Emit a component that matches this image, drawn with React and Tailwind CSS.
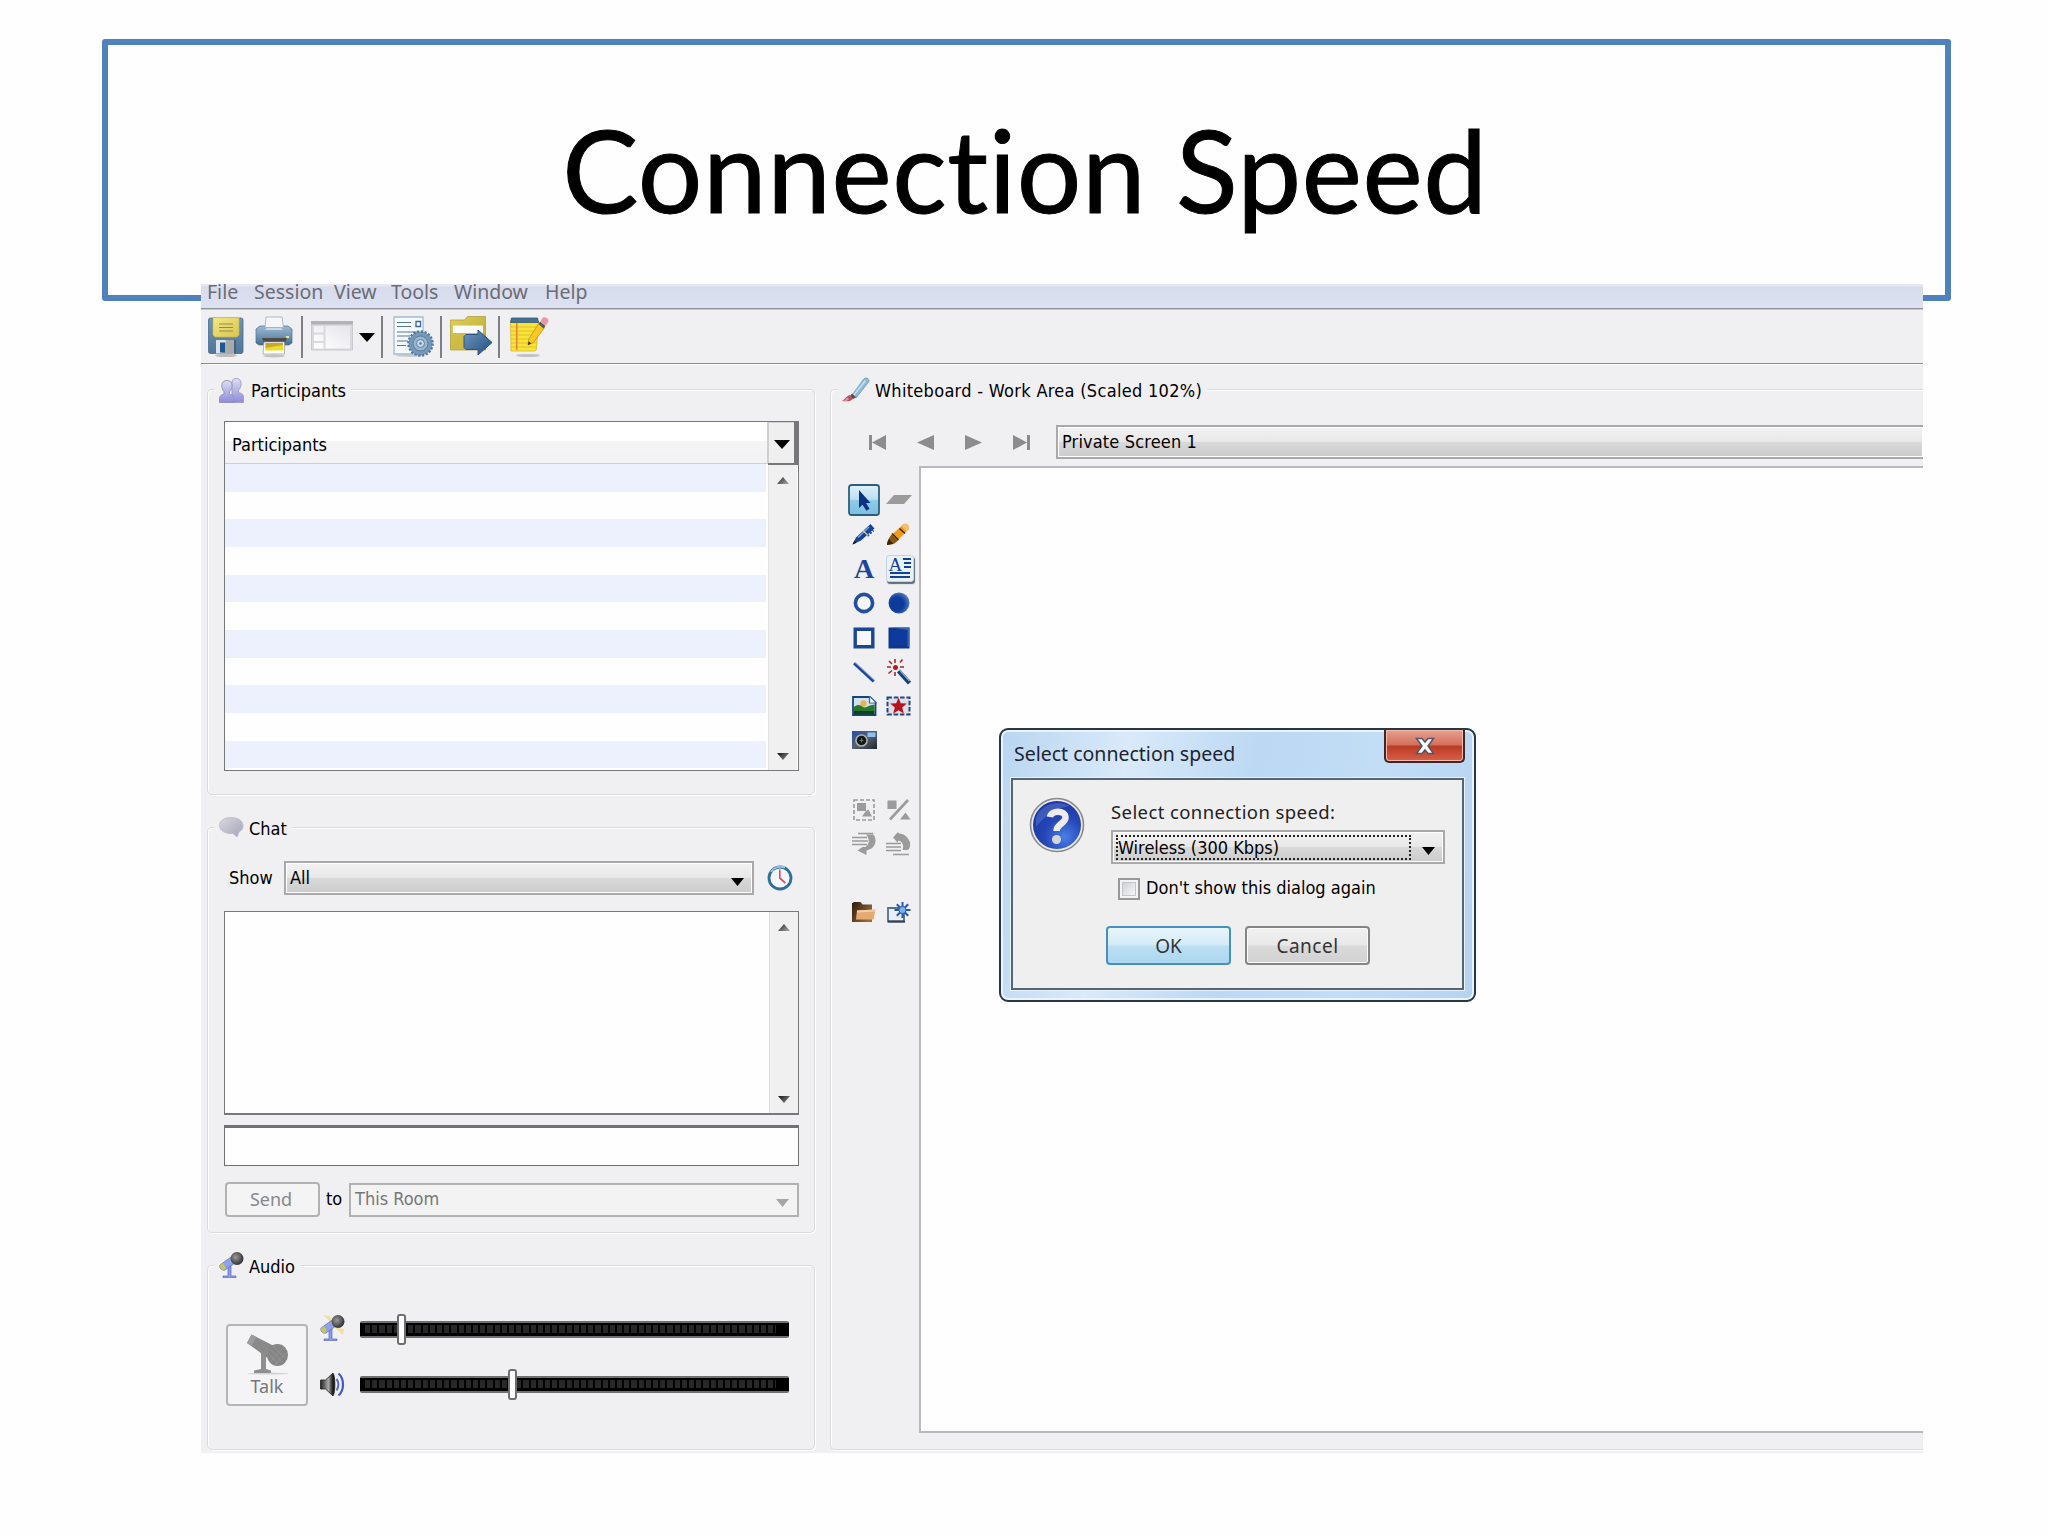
import React from "react";

const MENU_ITEMS = [
  { label: "File", width: "w-[47px]" },
  { label: "Session", width: "w-[80px]" },
  { label: "View", width: "w-[57px]" },
  { label: "Tools", width: "w-[63px]" },
  { label: "Window", width: "w-[91px]" },
  { label: "Help", width: "w-[60px]" },
];

const TAHOMA = "font-['DejaVu_Sans_Condensed','DejaVu_Sans',sans-serif] [font-stretch:condensed]";
const SEGOE = "font-['Noto_Sans','Open_Sans',sans-serif]";

/* ---------- small glyphs ---------- */

function Down({ className = "w-[14px] h-[8px] text-black" }) {
  return (
    <svg viewBox="0 0 14 8" preserveAspectRatio="none" className={className}>
      <path d="M0 0h14L7 8z" fill="currentColor" />
    </svg>
  );
}

function ScrollArrow({ up }) {
  return (
    <svg viewBox="0 0 13 8" preserveAspectRatio="none" className={`w-[12px] h-[7px] ${up ? "" : "rotate-180"}`}>
      <defs>
        <linearGradient id={up ? "sau" : "sad"} x1="0" x2="1" y1="0" y2="0.6">
          <stop offset="0" stopColor={up ? "#222" : "#999"} />
          <stop offset="1" stopColor={up ? "#999" : "#222"} />
        </linearGradient>
      </defs>
      <path d="M0 8h13L6.5 0z" fill={up ? "url(#sau)" : "url(#sad)"} />
    </svg>
  );
}

/* ---------- toolbar icons ---------- */

function SaveIcon() {
  return (
    <svg viewBox="0 0 36 42" className="w-[36px] h-[42px]">
      <defs>
        <linearGradient id="sv" x1="0" x2="0" y1="0" y2="1">
          <stop offset="0" stopColor="#6f93b3" />
          <stop offset="1" stopColor="#4f7699" />
        </linearGradient>
        <linearGradient id="svy" x1="0" x2="1" y1="0" y2="1">
          <stop offset="0" stopColor="#f3e884" />
          <stop offset="1" stopColor="#d9c54e" />
        </linearGradient>
      </defs>
      <ellipse cx="18" cy="39.5" rx="11" ry="1.6" fill="#bbb" />
      <rect x="0.5" y="2" width="34.5" height="35.5" rx="2" fill="url(#sv)" stroke="#476b8b" strokeWidth="0.8" />
      <path d="M5 1.5h26V19l-2 2H7l-2-2z" fill="url(#svy)" stroke="#c9b750" strokeWidth="0.7" />
      <path d="M11 8h14M11 11.5h14M11 15h14" stroke="#8c8a5c" strokeWidth="1" />
      <path d="M8 24h18v13.5H8z" fill="#dfe3e7" />
      <path d="M18 24h8v13.5H14z" fill="#a9aaac" />
      <path d="M12 26.5h5v10h-5z" fill="#1f5791" />
      <path d="M26 24h2v13.5h-2z" fill="#42627f" />
    </svg>
  );
}

function PrintIcon() {
  return (
    <svg viewBox="0 0 38 42" className="w-[38px] h-[42px]">
      <defs>
        <linearGradient id="pr" x1="0" x2="0" y1="0" y2="1">
          <stop offset="0" stopColor="#9db8d0" />
          <stop offset="0.5" stopColor="#7397b8" />
          <stop offset="1" stopColor="#436b90" />
        </linearGradient>
      </defs>
      <ellipse cx="19" cy="40" rx="11" ry="1.5" fill="#c4c4c4" />
      <path d="M1 13l4-3h28l4 3v14l-3 2H4l-3-2z" fill="url(#pr)" stroke="#4c7090" strokeWidth="0.7" />
      <path d="M11 1h16l1.5 10.5H10z" fill="#f4f6f8" stroke="#a5a9ad" strokeWidth="0.8" />
      <path d="M12 12h14l2 2H10z" fill="#cddae6" />
      <path d="M7 22h25l-2 5H9z" fill="#4c4c42" />
      <path d="M9 26h20.5v12H8z" fill="#fff" stroke="#9a9a9a" strokeWidth="0.7" />
      <path d="M10.5 27h17.5v7.5H10.5z" fill="#f1da2c" />
      <path d="M10.5 27h17.5v2l-17.5 3z" fill="#c3aa2c" />
      <path d="M31 20h3v2h-3z" fill="#e8e48a" />
    </svg>
  );
}

function LayoutIcon() {
  return (
    <svg viewBox="0 0 42 30" className="w-[42px] h-[30px]">
      <defs>
        <linearGradient id="ly" x1="0" x2="1" y1="1" y2="0">
          <stop offset="0" stopColor="#ffffff" />
          <stop offset="1" stopColor="#e6e6ea" />
        </linearGradient>
      </defs>
      <path d="M0.5 1h41v28h-41z" fill="#d9dade" stroke="#c9cacf" strokeWidth="1" />
      <path d="M0 0h42v3.5H0z" fill="#b3b3b5" />
      <path d="M3 5h9.5v6.5H3zM3 13.5h9.5v6.5H3zM3 22h9.5v5.5H3zM14.5 5H39v22.5H14.5z" fill="url(#ly)" />
    </svg>
  );
}

function GearDocIcon() {
  return (
    <svg viewBox="0 0 42 42" className="w-[42px] h-[42px]">
      <ellipse cx="16" cy="39.5" rx="13" ry="1.5" fill="#ccc" />
      <path d="M1 1h29v37H1z" fill="#f7fafc" stroke="#9fbcd6" strokeWidth="1.3" />
      <path d="M4 6.5h14M4 10.5h14M4 16h22M4 20h13M4 25h11M4 29.5h9" stroke="#55779b" strokeWidth="1.2" />
      <path d="M23 5.5h4.5v5H23z" fill="#fff" stroke="#3a669a" strokeWidth="1.3" />
      <circle cx="27.5" cy="27.5" r="11.8" fill="#6d92b4" stroke="#527a9f" strokeWidth="3" strokeDasharray="2.2 1.5" />
      <circle cx="27.5" cy="27.5" r="11" fill="#7699ba" />
      <circle cx="27.5" cy="27.5" r="7.5" fill="#9bb5cd" stroke="#557c9f" strokeWidth="1" />
      <circle cx="27.5" cy="27.5" r="4" fill="#c9d7e4" stroke="#5a81a5" strokeWidth="1" />
      <circle cx="27.5" cy="27.5" r="1.2" fill="#55789b" />
    </svg>
  );
}

function FolderArrowIcon() {
  return (
    <svg viewBox="0 0 43 42" className="w-[43px] h-[42px]">
      <defs>
        <linearGradient id="fa" x1="0" x2="1" y1="0" y2="1">
          <stop offset="0" stopColor="#e0d05a" />
          <stop offset="1" stopColor="#b8a62c" />
        </linearGradient>
        <linearGradient id="fb" x1="0" x2="1" y1="0" y2="1">
          <stop offset="0" stopColor="#7196ba" />
          <stop offset="1" stopColor="#1f4f82" />
        </linearGradient>
      </defs>
      <path d="M0.5 4h14l3-3.5h18V34h-35z" fill="url(#fa)" stroke="#a99a35" strokeWidth="0.7" />
      <path d="M3 9.5h30v7.5H3z" fill="#fbfbf7" />
      <path d="M1 17.5h34V33.5H1z" fill="#cfbd44" opacity="0.7" />
      <path d="M16 18.5h12V14l14 12.500-14 12.500v-5.500H16l-2-2v-11z" fill="url(#fb)" stroke="#2c5580" strokeWidth="1" />
    </svg>
  );
}

function NotepadIcon() {
  return (
    <svg viewBox="0 0 40 42" className="w-[40px] h-[42px]">
      <ellipse cx="18" cy="39.5" rx="12" ry="1.6" fill="#c2c2c2" />
      <path d="M0.5 5h28l-2 28-1.5 2H1z" fill="#fbe534" stroke="#cdb11f" strokeWidth="0.7" />
      <path d="M1.5 2h26l1 4.500H0.5z" fill="#46708f" stroke="#2f5878" strokeWidth="0.8" />
      <path d="M1 11h26M1 15h26M1 19h26M1 23h26M1 27h26M1 31h25" stroke="#d9bd3a" strokeWidth="1" />
      <path d="M6.8 7v27" stroke="#e06a3a" strokeWidth="1.2" />
      <path d="M29 7l5.5 4.5-11 15-5.5 2.5.8-6z" fill="#f7cb23" stroke="#c8921f" strokeWidth="0.9" />
      <path d="M18 29l.6-3.8 2.7 2.2z" fill="#2b2b1a" />
      <path d="M30 5.5l5.5 4.5-2 2.5L28.5 8z" fill="#555a60" />
      <path d="M32 2.5c2-3 7-0.5 6.5 3L35.5 10 30.5 5.5z" fill="#eb98a5" />
    </svg>
  );
}

/* ---------- legend icons ---------- */

function PeopleIcon() {
  return (
    <svg viewBox="0 0 25 25" className="w-[25px] h-[25px]">
      <defs>
        <linearGradient id="pp" x1="0" x2="0" y1="0" y2="1">
          <stop offset="0" stopColor="#dedef2" />
          <stop offset="1" stopColor="#8e8bdc" />
        </linearGradient>
      </defs>
      <path d="M13 4c0-2.5 2-3.6 4.5-3.600S22 2 22 5.500s-1.200 5.500-2.500 6.500v2.500c3 .7 5 2 5 4.500v5.500H13z" fill="url(#pp)" stroke="#9c9cc0" strokeWidth="0.9" />
      <path d="M8 2.500c3 0 5 1.700 5 5 0 3-1.200 5-2.500 6.200v2.500c3 .6 4.500 2 4.500 4.300v4H0.500v-4c0-2.500 1.500-3.700 4.500-4.300v-2.500C3.700 12.500 2.800 10.500 2.800 7.500c0-3.300 2.200-5 5.200-5z" fill="url(#pp)" stroke="#8f8fb8" strokeWidth="0.9" />
    </svg>
  );
}

function BubbleIcon() {
  return (
    <svg viewBox="0 0 25 21" className="w-[25px] h-[21px] -mt-[2px]">
      <defs>
        <linearGradient id="bb" x1="0" x2="1" y1="0" y2="1">
          <stop offset="0" stopColor="#d9d9de" />
          <stop offset="1" stopColor="#a3a4b8" />
        </linearGradient>
      </defs>
      <path d="M12 0.500c7 0 12 3.500 12 8 0 3.500-1.500 5-4 6.500l-2 5-4-3.500C6 17 .5 13.500.5 8.500.500 4 5 .5 12 .5z" fill="url(#bb)" stroke="#b9bac6" strokeWidth="0.8" />
    </svg>
  );
}

function BrushIcon() {
  return (
    <svg viewBox="0 0 28 25" className="w-[28px] h-[25px] -mt-[2px]">
      <path d="M10 18L21 3c2-3.500 6.500-2 6 1.500L14 21z" fill="#8db9d4" stroke="#6f9dbb" strokeWidth="0.8" />
      <path d="M12 18L23.5 3.5" stroke="#c7e0ee" strokeWidth="1.6" />
      <path d="M10 16.500l4 4-3 1.500-3-3z" fill="#5c4a56" />
      <path d="M8 18l3 4c-2 2.500-6 2.500-11 2 3-1.500 4-5 8-6z" fill="#b5545f" />
      <path d="M0 24c3-.5 4-2 5-3.500l2 2c-2 1.300-4 1.700-7 1.500z" fill="#dc9aa2" />
    </svg>
  );
}

function MicIcon({ glow }) {
  return (
    <svg viewBox="0 0 25 26" className="w-[25px] h-[26px] -mt-[2px]">
      <defs>
        <radialGradient id="mc" cx="0.4" cy="0.4" r="0.7">
          <stop offset="0" stopColor="#9a9a9a" />
          <stop offset="1" stopColor="#222" />
        </radialGradient>
      </defs>
      {glow && <path d="M3 0l7 1 3 8zM14 12l10 2-1 6z" fill="#eee2a0" />}
      <path d="M9 14h3v10h5v1.600H4V24h5z" fill="#8b9be6" stroke="#5468bb" strokeWidth="0.7" />
      <path d="M1 13L12 5l4 6-10 7c-3 1-6-2-5-5z" fill="#8ea2ea" stroke="#5c70b8" strokeWidth="0.7" />
      <path d="M1 13l3-2 3 5-2 2c-2 .5-4-2-4-5z" fill="#c5c55c" />
      <circle cx="18" cy="6.5" r="6.5" fill="url(#mc)" />
    </svg>
  );
}

function SpeakerIcon() {
  return (
    <svg viewBox="0 0 25 25" className="w-[25px] h-[25px]">
      <defs>
        <linearGradient id="sp" x1="0" x2="1" y1="0" y2="0">
          <stop offset="0" stopColor="#222" />
          <stop offset="0.55" stopColor="#aaa" />
          <stop offset="0.8" stopColor="#333" />
          <stop offset="1" stopColor="#000" />
        </linearGradient>
      </defs>
      <path d="M0.500 8h5l7.500-7c2.500 3 2.500 20 0 23l-7.500-7h-5z" fill="url(#sp)" stroke="#222" strokeWidth="0.8" />
      <path d="M16.500 7c2.500 3 2.500 8 0 11.500" fill="none" stroke="#5c6bd0" strokeWidth="2" />
      <path d="M18.500 1.500c6 5 6 17 0 22" fill="none" stroke="#4558c8" strokeWidth="2.2" />
    </svg>
  );
}

function TalkIcon() {
  return (
    <svg viewBox="0 0 43 41" className="w-[43px] h-[41px] shrink-0">
      <ellipse cx="22" cy="39.6" rx="21" ry="1" fill="#d2d2d2" />
      <path d="M15 18h5v17l5 1.500v2.500H8v-2.500l7-1.500z" fill="#8f8f8f" />
      <path d="M5.500 0.500L28 12c-5 2-7 6-6.500 12L1 9z" fill="#8a8a8a" />
      <path d="M5.500 0.500l5 2.500-5 9L1 9z" fill="#9c9c9c" />
      <ellipse cx="31.5" cy="21" rx="10.5" ry="11" fill="#858585" />
      <path d="M24 15l12 13M27 12l12 12M23 20l9 10M38 13L24 28M41 18L29 31" stroke="#969696" strokeWidth="0.8" />
    </svg>
  );
}

function ClockIcon() {
  return (
    <svg viewBox="0 0 26 26" className="w-[26px] h-[26px]">
      <circle cx="13" cy="13" r="11" fill="#f3f7fb" stroke="#2f6d9b" strokeWidth="2.8" />
      <path d="M4 7C7 2 13 .6 18 2.500" fill="none" stroke="#9dc0da" strokeWidth="2" />
      <path d="M12.800 4.500V13l5.500 5" fill="none" stroke="#d8546a" strokeWidth="1.7" />
    </svg>
  );
}

/* ---------- whiteboard tools ---------- */

const NAVY = "#12409a";
const GREY = "#9b9b9b";

const TOOLS = [
  // pointer
  <svg viewBox="0 0 32 32" className="w-[32px] h-[32px]">
    <defs>
      <linearGradient id="tp" x1="0" x2="0" y1="0" y2="1">
        <stop offset="0" stopColor="#dff1fa" />
        <stop offset="0.48" stopColor="#b9dff1" />
        <stop offset="0.52" stopColor="#8fcae8" />
        <stop offset="1" stopColor="#7dbfe0" />
      </linearGradient>
    </defs>
    <rect x="1" y="1" width="30" height="30" rx="2.5" fill="url(#tp)" stroke="#2c5f7e" strokeWidth="1.8" />
    <path d="M11 6v18l3.500-3.200 4 6 3-2-3.500-5.800h4.500z" fill="#0d3184" />
  </svg>,
  // eraser
  <svg viewBox="0 0 26 24" className="w-[26px] h-[24px]">
    <path d="M8 7h18l-8 9H0z" fill={GREY} />
  </svg>,
  // pen
  <svg viewBox="0 0 24 22" className="w-[24px] h-[22px] -mt-[2px]">
    <path d="M0.500 21.500l3.500-7L18.500 1l4 4.500L9 17.500z" fill="#164392" />
    <path d="M6 14.500L17 4" stroke="#7fa0d8" strokeWidth="1.5" />
    <path d="M15.500 13l6-5.500" stroke={NAVY} strokeWidth="1.8" strokeDasharray="2 1.5" />
    <path d="M11 7.500l5 5" stroke="#d9d27a" strokeWidth="1.3" />
    <path d="M0.500 21.500l2-4 2 2.200z" fill="#111" />
  </svg>,
  // highlighter
  <svg viewBox="0 0 26 22" className="w-[26px] h-[22px] -mt-[2px]">
    <path d="M5 12.500L17 1.500c3-2 7 1.500 5.500 5L11 18z" fill="#f29b18" />
    <path d="M18 .9c3-1.500 6.500 1.500 4.500 5.500l-2 2-5-5.300z" fill="#f8bd66" />
    <path d="M13.500 5.500l5.500 5M6 10.500l6.500 6.500" stroke="#2b2008" strokeWidth="1.3" />
    <path d="M5.500 11.500l6.500 6-3.500 3L1 22c0-4 2-7 4.500-10.500z" fill="#8a5610" />
    <path d="M1 22c0-2.500 1-4.500 2-6l4.500 5z" fill="#3d2606" />
  </svg>,
  // text
  <span className="font-['Liberation_Serif',serif] font-bold text-[28px] leading-[24px] text-[#1b4796]">A</span>,
  // text box
  <span className="w-[28px] h-[27px] flex justify-between items-start rounded-[3px] bg-[#e9f1fa] border border-[#c3d5e4] shadow-[1px_2px_1px_#5b6d77] mr-[-2px] px-[2px] bg-[linear-gradient(#12409a,#12409a),linear-gradient(#12409a,#12409a)] bg-[length:20px_2px,20px_2px] bg-[position:3px_16px,3px_20px] bg-no-repeat">
    <span className="font-['Liberation_Serif',serif] text-[19px] leading-[17px] text-[#12409a]">A</span>
    <svg viewBox="0 0 8 14" className="w-[8px] h-[14px] mt-[1px]">
      <path d="M0 2h8M1 6h7M1 10h7" stroke={NAVY} strokeWidth="2" />
    </svg>
  </span>,
  // circle
  <svg viewBox="0 0 22 22" className="w-[22px] h-[22px]">
    <circle cx="11" cy="11" r="8.6" fill="#f7f8fc" stroke="#234f9f" strokeWidth="3.6" />
  </svg>,
  // filled circle
  <svg viewBox="0 0 22 22" className="w-[22px] h-[22px]">
    <defs>
      <radialGradient id="tc" cx="0.4" cy="0.55" r="0.65">
        <stop offset="0.5" stopColor="#0e3b9b" />
        <stop offset="1" stopColor="#6387c8" />
      </radialGradient>
    </defs>
    <circle cx="11" cy="11" r="10.5" fill="url(#tc)" />
  </svg>,
  // square
  <svg viewBox="0 0 22 22" className="w-[22px] h-[22px]">
    <path d="M2.200 2.200h17.600v17.600H2.200z" fill="#f7f8fc" stroke="#1a4699" strokeWidth="3.4" />
  </svg>,
  // filled square
  <svg viewBox="0 0 22 22" className="w-[22px] h-[22px]">
    <path d="M0.500 0.500h21v21h-21z" fill="#0d3690" />
    <path d="M3 .5h18.500V19l-2 1V3z" fill="#3c64b4" />
    <path d="M3 3h16v15H3z" fill="#0e3b9b" />
  </svg>,
  // line
  <svg viewBox="0 0 22 22" className="w-[22px] h-[22px]">
    <path d="M1 2l20 18.500" stroke="#8fa9cf" strokeWidth="3.6" />
    <path d="M1 2.500l19.500 18" stroke="#1c4691" strokeWidth="2.2" />
  </svg>,
  // wand
  <svg viewBox="0 0 24 26" className="w-[24px] h-[26px]">
    <path d="M11.500 12L22.500 24" stroke="#164079" strokeWidth="4.2" />
    <path d="M12.500 11l10 11" stroke="#8ba9cf" strokeWidth="1.2" />
    <circle cx="8.5" cy="8.5" r="2.5" fill="#b01c24" />
    <path d="M8 0v4M2 2l3 3M0 8h4M1.500 14.500L5 11.500M8 13v4M13 3.500l2.500-3M13 8h4" stroke="#a62a2c" strokeWidth="1.6" />
  </svg>,
  // picture
  <svg viewBox="0 0 25 20" className="w-[25px] h-[20px] -mt-[2px]">
    <path d="M1 1h16.500l6 5.500V19H1z" fill="#cfe2f2" stroke="#174579" strokeWidth="1.8" />
    <circle cx="11.5" cy="7.5" r="3.2" fill="#efb24a" />
    <path d="M2 11c4-3 6-2 9 0s7-3 11.500-2v6H2z" fill="#287a2a" />
    <path d="M2 15h20.500v3.300H2z" fill="#123f1b" />
    <path d="M17.500 0v7h7z" fill="#fff" stroke="#3a659e" strokeWidth="1.2" />
  </svg>,
  // clip art
  <svg viewBox="0 0 25 20" className="w-[25px] h-[20px] -mt-[2px]">
    <path d="M1.500 1.500h22v17h-22z" fill="#dcdfe9" stroke="#27467c" strokeWidth="2" strokeDasharray="4.5 1.8" />
    <path d="M12.500 1.500l2.300 5.700 6 .3-4.600 4 1.600 6-5.300-3.300-5.300 3.300 1.600-6-4.600-4 6-.3z" fill="#b3151f" />
  </svg>,
  // camera
  <svg viewBox="0 0 25 18" className="w-[25px] h-[18px] -mt-[2px]">
    <defs>
      <linearGradient id="cm" x1="0" x2="1" y1="0" y2="1">
        <stop offset="0" stopColor="#254fae" />
        <stop offset="0.5" stopColor="#57626e" />
        <stop offset="1" stopColor="#20262c" />
      </linearGradient>
    </defs>
    <path d="M0 0h25v18H0z" fill="url(#cm)" />
    <path d="M15.500 1.500h8v4.500h-8z" fill="#8fc0f4" />
    <circle cx="9.5" cy="9.5" r="6.3" fill="#aab0ae" />
    <circle cx="9.5" cy="9.5" r="4.7" fill="#151515" />
    <path d="M9.500 7v4.500M7.500 9.500h4" stroke="#5d7a68" strokeWidth="1.2" />
  </svg>,
  null,
  null,
  null,
  // group
  <svg viewBox="0 0 22 22" className="w-[22px] h-[22px]">
    <path d="M1 1h20v20H1z" fill="none" stroke={GREY} strokeWidth="1.6" strokeDasharray="4 2" />
    <path d="M4 4h9v8H4zM9 17.500h10l-3.500-7-3 2z" fill={GREY} />
  </svg>,
  // ungroup
  <svg viewBox="0 0 24 22" className="w-[24px] h-[22px]">
    <path d="M0.500 1.500h9v8.500h-9zM13 20.500h10.500l-5-7z" fill={GREY} />
    <path d="M21 1L3 20.500" stroke={GREY} strokeWidth="2.6" />
  </svg>,
  // send to back
  <svg viewBox="0 0 24 24" className="w-[24px] h-[24px]">
    <path d="M6 1.500h15M0 5.500h15M0 9h16M0 12.500h15" stroke={GREY} strokeWidth="1.6" />
    <path d="M14 2.500h7.500c3 4.500 3 10-2 14l-5 2V23l-9-4.500 5-3.500h3c4-3 4.500-8 .5-12.500z" fill={GREY} />
  </svg>,
  // bring to front
  <svg viewBox="0 0 25 24" className="w-[25px] h-[24px]">
    <path d="M0 11.500h15M0 15h15M0 18.500h15M7 22.500h16" stroke={GREY} strokeWidth="1.6" />
    <path d="M7 5.500L12 0l1 1.500c6 0 9 4.500 11 8.500 .5 4 0 6-2 8h-5.500c1.500-4 .5-7-2.500-9l-2-.3V11z" fill={GREY} />
  </svg>,
  null,
  null,
  // open folder
  <svg viewBox="0 0 24 21" className="w-[24px] h-[21px]">
    <defs>
      <linearGradient id="fo" x1="0" x2="1" y1="0" y2="0.6">
        <stop offset="0" stopColor="#2b1a0d" />
        <stop offset="1" stopColor="#9b6a3c" />
      </linearGradient>
    </defs>
    <path d="M0 1.500L2 0h6.500l2 2.500H20V20H0z" fill="url(#fo)" />
    <path d="M5 8.500l18.500-1-2 10H4z" fill="#e3ab72" />
    <path d="M5 8.500l18.500-1-.4 2L5 10.500z" fill="#f3cfa5" />
  </svg>,
  // new
  <svg viewBox="0 0 24 21" className="w-[24px] h-[21px]">
    <path d="M1 6h16v13.500H1z" fill="#e9eef4" stroke="#54708e" strokeWidth="1.8" />
    <path d="M1 19.500h17" stroke="#34414e" strokeWidth="2" />
    <path d="M15.500 0v16M7.500 8h16M9.800 2.300l11.400 11.400M21.200 2.300L9.800 13.700" stroke="#2258b4" strokeWidth="2" />
    <circle cx="15.5" cy="8" r="3.6" fill="#7fb0ea" stroke="#2258b4" strokeWidth="1" />
  </svg>,
];

const NAV_BUTTONS = [
  "M0 0h3v15H0zM3 7.500L17 0v15z",
  "M0 7.500L17 0v15z",
  "M17 7.500L0 0v15z",
  "M14 0h3v15h-3zM14 7.500L0 0v15z",
];

/* ---------- building blocks ---------- */

function Group({ icon, title, className, legendClass = "", children }) {
  return (
    <section
      className={`border border-[#d9dcdd] rounded-[5px] shadow-[inset_1px_1px_0_#fff,1px_1px_0_#fff] ${className}`}
    >
      <div className={`relative flex items-center h-[26px] -mt-[13px] ml-[6px] w-fit bg-[#f0eff1] pl-[5px] ${legendClass}`}>
        {icon}
        <span className={`${TAHOMA} text-[18px] leading-[26px] whitespace-nowrap mt-[1px]`}>{title}</span>
      </div>
      {children}
    </section>
  );
}

function Combo({ className, children }) {
  return (
    <div
      className={`border-2 border-[#a9a9ab] h-[34px] flex items-center shadow-[inset_0_0_0_1px_#fff] bg-[linear-gradient(#f3f2f3,#e9e8e9_48%,#d9d8d9_52%,#cdcccd)] ${className}`}
    >
      {children}
    </div>
  );
}

function ScrollBar() {
  return (
    <div className="w-[29px] border-l border-[#e2e2e3] bg-[#f0f0f1] flex flex-col items-center justify-between pt-[12px] pb-[10px]">
      <ScrollArrow up />
      <ScrollArrow />
    </div>
  );
}

function Slider({ icon, value, className = "" }) {
  return (
    <div className={`flex items-center h-[32px] ${className}`}>
      {icon}
      <div className="relative ml-[15px] w-[429px] h-[17px] rounded-[2px] bg-black border-y-2 border-[#6f6f6f] flex items-center pl-[5px]">
        <div className="w-[411px] h-[8px] bg-[repeating-linear-gradient(90deg,#272727_0,#272727_5.200px,#000_5.200px,#000_7.200px)]" />
        <div
          className="absolute -top-[9px] w-[9px] h-[31px] rounded-[3px] border-2 border-[#6e6e6e] bg-white"
          style={{ left: value }}
        />
      </div>
    </div>
  );
}

function ParticipantsPanel() {
  return (
    <Group icon={<PeopleIcon />} title="Participants" className="h-[406px]" legendClass="pr-[5px] gap-[7px]">
      <div className="mt-[18px] ml-[16px] w-[575px] h-[350px] border border-[#77787c] bg-white flex">
        <div className="flex-1 flex flex-col">
          <div className={`${TAHOMA} h-[42px] shrink-0 text-[18px] leading-[46px] pl-[7px] border-b border-r border-[#cfcfd1] bg-[linear-gradient(#fff_45%,#f5f5f6_46%,#f2f2f4)]`}>
            Participants
          </div>
          <div className="flex-1 mr-[2px] bg-[repeating-linear-gradient(#edf1fd_0,#edf1fd_27.650px,#fefefe_27.650px,#fefefe_55.300px)]" />
        </div>
        <div className="flex flex-col w-[30px]">
          <div className="h-[43px] border-b-2 border-r-4 border-[#77777b] bg-[#efeff0] shadow-[inset_1px_1px_0_#d0d0d2] flex items-center justify-center pt-[4px] pl-[2px]">
            <Down className="w-[16px] h-[9px] text-black" />
          </div>
          <div className="flex-1 flex">
            <ScrollBar />
          </div>
        </div>
      </div>
    </Group>
  );
}

function ChatPanel() {
  return (
    <Group icon={<BubbleIcon />} title="Chat" className="h-[406px] mt-[32px]" legendClass="pr-[5px] gap-[5px]">
      <div className="pl-[16px] pr-[15px]">
        <div className="flex items-center mt-[20px] h-[34px]">
          <span className={`${TAHOMA} text-[18px] leading-[26px] w-[60px] pl-[5px] -mt-[1px]`}>Show</span>
          <Combo className="w-[470px] pl-[4px] pr-[8px] justify-between">
            <span className={`${TAHOMA} text-[18px] leading-[26px] -mt-[1px]`}>All</span>
            <Down className="w-[13px] h-[8px] mt-[7px] text-black" />
          </Combo>
          <span className="ml-[13px]"><ClockIcon /></span>
        </div>
        <div className="mt-[16px] h-[204px] w-[575px] border border-b-2 border-[#77787c] bg-[#fefefe] flex justify-end">
          <ScrollBar />
        </div>
        <div className="mt-[10px] h-[41px] w-[575px] border border-t-[3px] border-[#707174] bg-[#fefefe]" />
        <div className="mt-[16px] flex items-center">
          <button className={`${SEGOE} ml-[1px] w-[95px] h-[35px] pr-[3px] rounded-[4px] border-2 border-[#b2b2b4] bg-[#f4f4f5] text-[18px] leading-[27px] text-[#88888c]`}>
            Send
          </button>
          <span className={`${TAHOMA} text-[18px] leading-[26px] -mt-[1px] w-[29px] pl-[6px]`}>to</span>
          <div className="border-2 border-[#b2b2b4] bg-[#f3f3f4] h-[34px] w-[450px] flex items-center justify-between pl-[4px] pr-[8px]">
            <span className={`${TAHOMA} text-[18px] leading-[26px] -mt-[1px] text-[#77777b]`}>This Room</span>
            <Down className="w-[13px] h-[8px] mt-[6px] text-[#a5a5a7]" />
          </div>
        </div>
      </div>
    </Group>
  );
}

function AudioPanel() {
  return (
    <Group icon={<MicIcon />} title="Audio" className="h-[185px] mt-[32px]" legendClass="pr-[5px] gap-[5px]">
      <div className="flex mt-[34px] ml-[18px]">
        <button className="mt-[11px] w-[82px] h-[82px] rounded-[4px] border-2 border-[#b5b5b8] bg-[#f4f4f6] flex flex-col items-center pt-[8px]">
          <TalkIcon />
          <span className={`${SEGOE} text-[18px] leading-[22px] text-[#77777b]`}>Talk</span>
        </button>
        <div className="ml-[12px]">
          <Slider icon={<MicIcon glow />} value="37px" />
          <Slider icon={<SpeakerIcon />} value="148px" className="mt-[23px]" />
        </div>
      </div>
    </Group>
  );
}

function ConnectionDialog() {
  return (
    <div className="absolute left-[78px] top-[260px] w-[477px] h-[274px] rounded-[9px] border-2 border-[#2a3644] bg-[linear-gradient(100deg,#b9d5f0,#d9eafa_25%,#bcd8f3_50%,#c3ddf6_75%,#b5d3f0)] shadow-[inset_0_0_0_2px_#eaf4fd]">
      <div className="flex justify-between h-[48px]">
        <span className={`${SEGOE} text-[19.500px] pl-[13px] pt-[10px] leading-[27px] text-[#1b2430]`}>
          Select connection speed
        </span>
        <button className="mr-[9px] w-[81px] h-[33px] rounded-b-[5px] border-2 border-t-0 border-[#43242a] shadow-[inset_0_0_0_1px_#f3b9a9] bg-[linear-gradient(#e6a091,#d4705b_48%,#b93a22_52%,#d9604a)] flex items-center justify-center">
          <svg viewBox="0 0 20 18" className="w-[20px] h-[18px]">
            <path d="M1.500 1.500h5.500L10 5l3-3.500h5.500L13 9l5.500 7.500H13L10 13l-3 3.500H1.500L7 9z" fill="#fafafa" stroke="#53566a" strokeWidth="1.5" />
          </svg>
        </button>
      </div>
      <div className="ml-[10px] w-[453px] h-[212px] border-2 border-[#566573] bg-[#f0eff0] shadow-[0_0_0_1px_#e6f2fc] flex">
        <svg viewBox="0 0 56 56" className="w-[56px] h-[56px] ml-[16px] mt-[17px] shrink-0">
          <defs>
            <radialGradient id="qm" cx="0.65" cy="0.75" r="0.8">
              <stop offset="0" stopColor="#4a7fe6" />
              <stop offset="0.5" stopColor="#2647b8" />
              <stop offset="1" stopColor="#1c349c" />
            </radialGradient>
          </defs>
          <circle cx="28" cy="28" r="26.5" fill="#e9e9ea" stroke="#8a8a8c" strokeWidth="1.6" />
          <circle cx="28" cy="28" r="24" fill="url(#qm)" />
          <path d="M7 21C11 8 27 2 41 9 32 10 20 14 7 30z" fill="#5b7ad4" opacity="0.5" />
          <path d="M21 20c1-7 15.500-7.500 15.500.5 0 6-9 6.500-9 13.500" fill="none" stroke="#ececf0" strokeWidth="6.5" />
          <circle cx="27.5" cy="42.5" r="4.5" fill="#d5d5dc" />
        </svg>
        <div className="ml-[21px] pt-[18px]">
          <div className={`${SEGOE} ml-[5px] text-[18.500px] tracking-[0.400px] leading-[28px] text-[#222] whitespace-nowrap`}>
            Select connection speed:
          </div>
          <Combo className="ml-[5px] mt-[4px] w-[334px] pl-[3px] pr-[8px] justify-between">
            <span className={`${TAHOMA} text-[18px] leading-[21px] w-[295px] h-[25px] border-2 border-dotted border-[#222]`}>
              Wireless (300 Kbps)
            </span>
            <Down className="w-[13px] h-[8px] mt-[7px] text-black" />
          </Combo>
          <label className="ml-[12px] mt-[14px] h-[22px] flex items-center">
            <span className="w-[22px] h-[22px] border-2 border-[#96989a] bg-[#f4f4f4] p-[2px] flex">
              <span className="flex-1 border border-[#c2c5c9] bg-[linear-gradient(135deg,#cfd3d8,#f6f6f6)]" />
            </span>
            <span className={`${TAHOMA} ml-[6px] text-[18px] leading-[24px] -mt-[2px] whitespace-nowrap`}>Don't show this dialog again</span>
          </label>
          <div className="flex mt-[26px] gap-[14px]">
            <button className={`${SEGOE} w-[125px] h-[39px] rounded-[4px] border-2 border-[#4690c0] bg-[linear-gradient(#e8f5fc,#d3ebf8_48%,#bbe0f4_52%,#acd7ef)] text-[19px] leading-[32px] text-[#333]`}>
              OK
            </button>
            <button className={`${SEGOE} w-[125px] h-[39px] rounded-[4px] border-2 border-[#858587] shadow-[inset_0_0_0_1px_#fafafa] bg-[linear-gradient(#f2f1f2,#e9e8e9_48%,#dbdadb_52%,#d2d1d2)] text-[19px] leading-[32px] tracking-[0.500px] text-[#333]`}>
              Cancel
            </button>
          </div>
        </div>
      </div>
    </div>
  );
}

function Whiteboard() {
  return (
    <Group
      icon={<BrushIcon />}
      title={<span className="tracking-[0.300px]">Whiteboard - Work Area (Scaled 102%)</span>}
      className="ml-[15px] w-[1093px] h-[1061px] border-r-0 rounded-r-none flex flex-col"
      legendClass="pr-[5px] gap-[5px] shrink-0"
    >
      <div className="flex items-center mt-[22px] h-[34px]">
        <div className="flex gap-[31px] ml-[38px] w-[187px]">
          {NAV_BUTTONS.map((d) => (
            <svg key={d} viewBox="0 0 17 15" className="w-[17px] h-[15px] shrink-0">
              <path d={d} fill="#8c8b8e" />
            </svg>
          ))}
        </div>
        <Combo className="flex-1 border-r-0 pl-[4px]">
          <span className={`${TAHOMA} text-[18px] leading-[26px] -mt-[1px] tracking-[0.150px]`}>Private Screen 1</span>
        </Combo>
      </div>
      <div className="flex mt-[7px] h-[967px]">
        <div className="w-[88px] pl-[16px] pt-[17px]">
          <div className="grid grid-cols-[34.400px_34.400px] auto-rows-[34.400px] place-items-center">
            {TOOLS.map((tool, i) => (
              <div key={i} className="flex items-center justify-center">{tool}</div>
            ))}
          </div>
        </div>
        <div className="relative flex-1 border-l-2 border-y-2 border-[#b9b8bc] bg-[#fefefe]">
          <ConnectionDialog />
        </div>
      </div>
    </Group>
  );
}

export default function App() {
  return (
    <main className="w-[2048px] h-[1536px] bg-[#fefefe] overflow-hidden text-black pt-[39px]">
      <header className="ml-[102px] w-[1849px] h-[262px] border-6 border-[#4f81bd] rounded-[3px] flex justify-center">
        <h1 className="font-['Lato',sans-serif] text-[114px] leading-[110px] pt-[69px] whitespace-nowrap tracking-[0.600px] [font-variant-ligatures:none] [-webkit-text-stroke:1px_#000] -ml-[3px]">
          Connection Speed
        </h1>
      </header>

      <div className="relative -mt-[17px] ml-[201px] w-[1722px] h-[1169px] bg-[#f0eff1]">
        <nav className={`${SEGOE} h-[25px] flex pl-[6px] border-b border-[#8f9098] bg-[linear-gradient(#e6e7f3_0,#e6e7f3_2px,#d7dbeb_3px,#dde2f3)] text-[19.500px] leading-[16px] text-[#6b6c76]`}>
          {MENU_ITEMS.map((item) => (
            <span key={item.label} className={item.width}>{item.label}</span>
          ))}
        </nav>

        <div className="h-[55px] border-b border-[#8d8d93] border-t border-t-[#c9c9d0] shadow-[0_1px_0_#fff] flex items-start pl-[7px] pt-[6px]">
          <SaveIcon />
          <span className="ml-[11px]"><PrintIcon /></span>
          <i className="ml-[8px] w-[2px] h-[42px] bg-[#808083]" />
          <span className="ml-[8px] mt-[5px]"><LayoutIcon /></span>
          <span className="ml-[6px] mt-[17px]"><Down className="w-[16px] h-[9px] text-black" /></span>
          <i className="ml-[6px] w-[2px] h-[42px] bg-[#808083]" />
          <span className="ml-[10px]"><GearDocIcon /></span>
          <i className="ml-[5px] w-[2px] h-[42px] bg-[#808083]" />
          <span className="ml-[8px]"><FolderArrowIcon /></span>
          <i className="ml-[5px] w-[2px] h-[42px] bg-[#808083]" />
          <span className="ml-[10px]"><NotepadIcon /></span>
        </div>

        <div className="flex pt-[25px] pl-[6px]">
          <div className="w-[608px]">
            <ParticipantsPanel />
            <ChatPanel />
            <AudioPanel />
          </div>
          <Whiteboard />
        </div>
      </div>
    </main>
  );
}
